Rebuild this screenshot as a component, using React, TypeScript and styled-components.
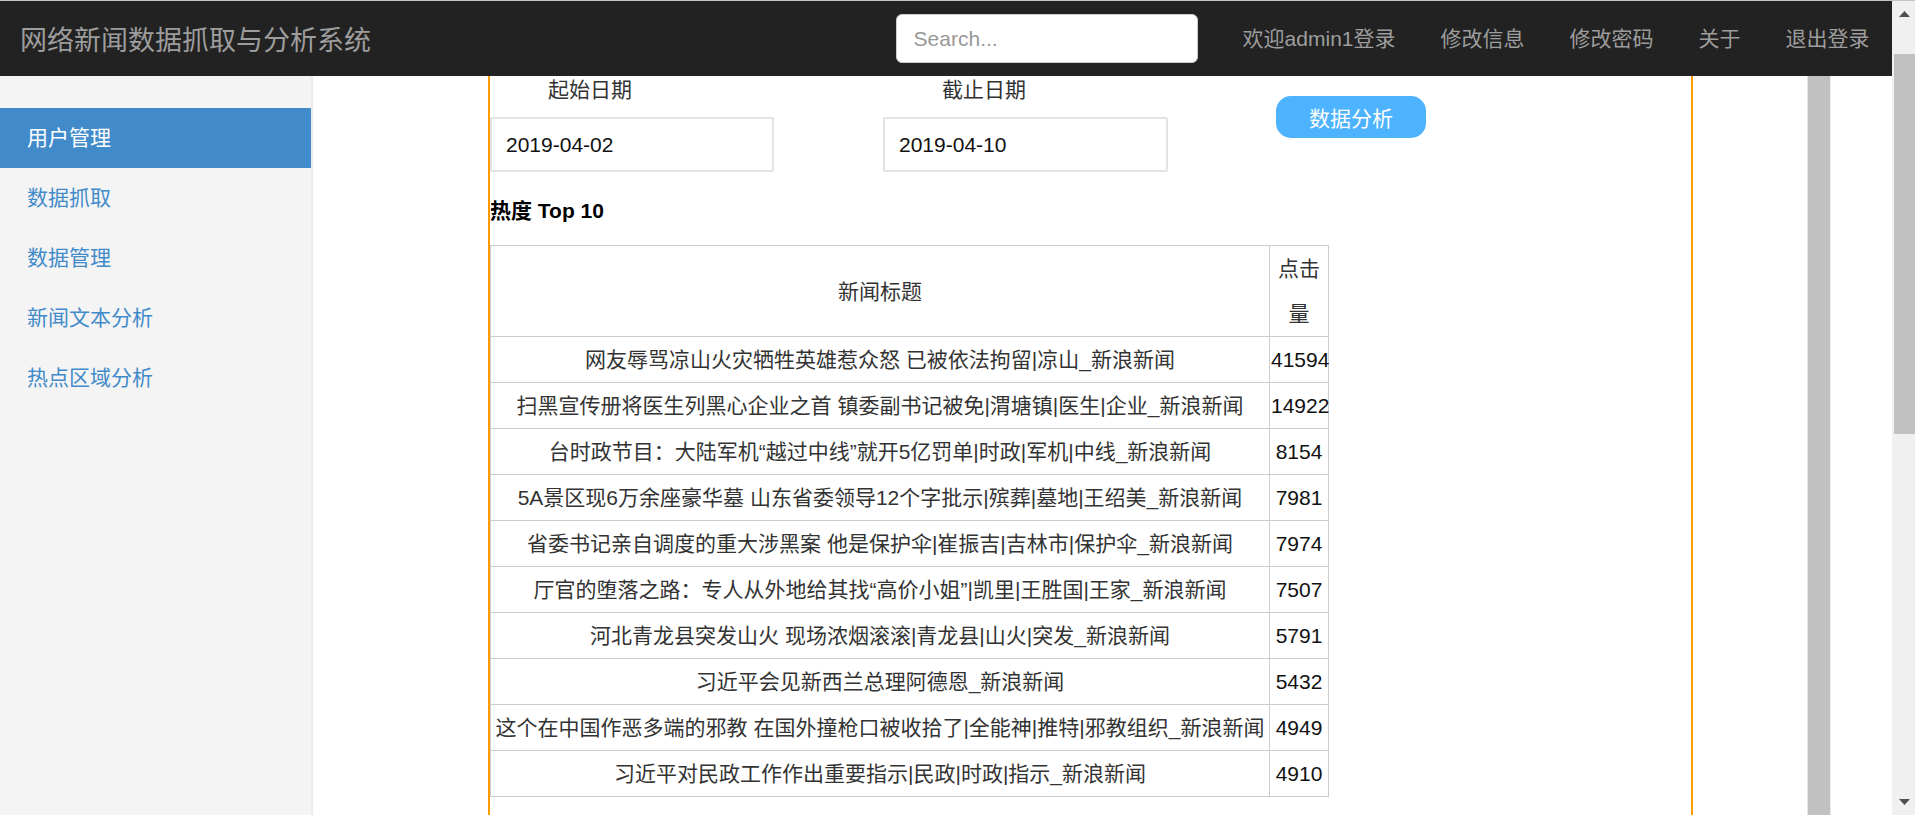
import React from "react";
import styled, { createGlobalStyle } from "styled-components";

const GlobalStyle = createGlobalStyle`
    html, body {
        margin: 0;
        padding: 0;
        height: 100%;
        overflow: hidden;
    }
    body {
        font-family: "Liberation Sans", "Noto Sans CJK SC", sans-serif;
        font-size: 21px;
        color: #333;
        background: #fff;
    }
    #root {
        height: 100%;
    }
`;

const Page = styled.div`
    display: flex;
    height: 815px;
    box-sizing: border-box;
    border-top: 1px solid #c4c4c4;
    overflow: hidden;
`;

const Main = styled.div`
    flex: 1;
    min-width: 0;
    display: flex;
    flex-direction: column;
`;

const Navbar = styled.div`
    height: 75px;
    flex-shrink: 0;
    background: #222;
    display: flex;
    align-items: center;
`;

const Brand = styled.div`
    padding-left: 20px;
    font-size: 27px;
    color: #9d9d9d;
    white-space: nowrap;
`;

const NavRight = styled.div`
    margin-left: auto;
    display: flex;
    align-items: center;
`;

const Search = styled.input`
    width: 302px;
    height: 49px;
    box-sizing: border-box;
    margin-right: 22.5px;
    padding: 0 17px;
    border: 1.5px solid #ccc;
    border-radius: 6px;
    font-family: inherit;
    font-size: 21px;
    color: #555;
    background: #fff;
    outline: none;
    &::placeholder {
        color: #999;
    }
`;

const NavLink = styled.a`
    padding: 0 22.5px;
    line-height: 75px;
    color: #9d9d9d;
    text-decoration: none;
    white-space: nowrap;
`;

const Body = styled.div`
    flex: 1;
    min-height: 0;
    display: flex;
`;

const Sidebar = styled.div`
    width: 311px;
    flex-shrink: 0;
    background: #f4f4f4;
    border-right: 2px solid #ebebeb;
    padding-top: 32px;
`;

const SideItem = styled.div<{ $active?: boolean }>`
    height: 60px;
    line-height: 60px;
    padding-left: 27px;
    color: ${(p) => (p.$active ? "#fff" : "#428bca")};
    background: ${(p) => (p.$active ? "#428bca" : "transparent")};
`;

const Content = styled.div`
    flex: 1;
    min-width: 0;
    display: flex;
    padding-left: 175px;
`;

const Panel = styled.div`
    width: 1205px;
    flex-shrink: 0;
    box-sizing: border-box;
    border-left: 2px solid #ff9900;
    border-right: 2px solid #ff9900;
    overflow: hidden;
`;

const FormRow = styled.div`
    display: flex;
    align-items: flex-start;
`;

const Field = styled.div<{ $width: number; $labelPad: number; $gap: number }>`
    width: ${(p) => p.$width}px;
    margin-right: ${(p) => p.$gap}px;
    display: flex;
    flex-direction: column;
    & > label {
        height: 28px;
        line-height: 28px;
        padding-left: ${(p) => p.$labelPad}px;
        color: #333;
    }
`;

const DateInput = styled.div`
    margin-top: 13px;
    height: 55px;
    box-sizing: border-box;
    border: 2px solid #e3e3e3;
    border-radius: 2px;
    padding-left: 14px;
    line-height: 51px;
    color: #111;
`;

const AnalyzeButton = styled.button`
    margin-top: 20px;
    width: 150px;
    height: 42px;
    border: none;
    border-radius: 15px;
    background: #4db3ff;
    color: #fff;
    font-family: inherit;
    font-size: 21px;
    cursor: pointer;
`;

const Heading = styled.div`
    margin-top: 24px;
    line-height: 30px;
    font-weight: bold;
    color: #000;
`;

const Table = styled.table`
    margin-top: 19px;
    width: 839px;
    table-layout: fixed;
    border-collapse: collapse;
    & th,
    & td {
        border: 1px solid #ccc;
        padding: 0 1px;
        line-height: 45px;
        text-align: center;
        vertical-align: middle;
        font-weight: normal;
        color: #333;
    }
    & td:first-child {
        white-space: nowrap;
        overflow: hidden;
    }
    & td:last-child {
        color: #111;
    }
`;

const InnerBar = styled.div`
    margin-left: auto;
    margin-right: 61px;
    width: 22px;
    flex-shrink: 0;
    background: #c1c1c1;
    border-left: 1px solid #e6e6e6;
    border-right: 1px solid #ededed;
`;

const PageBar = styled.div`
    width: 23px;
    flex-shrink: 0;
    background: #f0f0f0;
    display: flex;
    flex-direction: column;
`;

const BarArrow = styled.div`
    height: 26px;
    display: flex;
    align-items: center;
    justify-content: center;
    padding-left: 1px;
`;

const BarTrack = styled.div`
    flex: 1;
    padding-top: 27px;
    padding-left: 2px;
`;

const BarThumb = styled.div`
    height: 380px;
    background: #c1c1c1;
`;

const rows: [string, number][] = [
    ["网友辱骂凉山火灾牺牲英雄惹众怒 已被依法拘留|凉山_新浪新闻", 41594],
    ["扫黑宣传册将医生列黑心企业之首 镇委副书记被免|渭塘镇|医生|企业_新浪新闻", 14922],
    ["台时政节目：大陆军机“越过中线”就开5亿罚单|时政|军机|中线_新浪新闻", 8154],
    ["5A景区现6万余座豪华墓 山东省委领导12个字批示|殡葬|墓地|王绍美_新浪新闻", 7981],
    ["省委书记亲自调度的重大涉黑案 他是保护伞|崔振吉|吉林市|保护伞_新浪新闻", 7974],
    ["厅官的堕落之路：专人从外地给其找“高价小姐”|凯里|王胜国|王家_新浪新闻", 7507],
    ["河北青龙县突发山火 现场浓烟滚滚|青龙县|山火|突发_新浪新闻", 5791],
    ["习近平会见新西兰总理阿德恩_新浪新闻", 5432],
    ["这个在中国作恶多端的邪教 在国外撞枪口被收拾了|全能神|推特|邪教组织_新浪新闻", 4949],
    ["习近平对民政工作作出重要指示|民政|时政|指示_新浪新闻", 4910],
];

const menu = ["用户管理", "数据抓取", "数据管理", "新闻文本分析", "热点区域分析"];

const links = ["欢迎admin1登录", "修改信息", "修改密码", "关于", "退出登录"];

export default function App() {
    return (
        <>
            <GlobalStyle />
            <Page>
                <Main>
                    <Navbar>
                        <Brand>网络新闻数据抓取与分析系统</Brand>
                        <NavRight>
                            <Search placeholder="Search..." />
                            {links.map((l) => (
                                <NavLink key={l}>{l}</NavLink>
                            ))}
                        </NavRight>
                    </Navbar>
                    <Body>
                        <Sidebar>
                            {menu.map((m, i) => (
                                <SideItem key={m} $active={i === 0}>
                                    {m}
                                </SideItem>
                            ))}
                        </Sidebar>
                        <Content>
                            <Panel>
                                <FormRow>
                                    <Field $width={284} $labelPad={58} $gap={109}>
                                        <label>起始日期</label>
                                        <DateInput>2019-04-02</DateInput>
                                    </Field>
                                    <Field $width={285} $labelPad={59} $gap={108}>
                                        <label>截止日期</label>
                                        <DateInput>2019-04-10</DateInput>
                                    </Field>
                                    <AnalyzeButton>数据分析</AnalyzeButton>
                                </FormRow>
                                <Heading>热度 Top 10</Heading>
                                <Table>
                                    <colgroup>
                                        <col style={{ width: 779 }} />
                                        <col />
                                    </colgroup>
                                    <thead>
                                        <tr>
                                            <th>新闻标题</th>
                                            <th>点击量</th>
                                        </tr>
                                    </thead>
                                    <tbody>
                                        {rows.map(([title, n]) => (
                                            <tr key={title}>
                                                <td>{title}</td>
                                                <td>{n}</td>
                                            </tr>
                                        ))}
                                    </tbody>
                                </Table>
                            </Panel>
                            <InnerBar />
                        </Content>
                    </Body>
                </Main>
                <PageBar>
                    <BarArrow>
                        <svg width="11" height="6" viewBox="0 0 11 6">
                            <polygon points="0,6 5.5,0 11,6" fill="#505050" />
                        </svg>
                    </BarArrow>
                    <BarTrack>
                        <BarThumb />
                    </BarTrack>
                    <BarArrow>
                        <svg width="11" height="6" viewBox="0 0 11 6">
                            <polygon points="0,0 11,0 5.5,6" fill="#505050" />
                        </svg>
                    </BarArrow>
                </PageBar>
            </Page>
        </>
    );
}
